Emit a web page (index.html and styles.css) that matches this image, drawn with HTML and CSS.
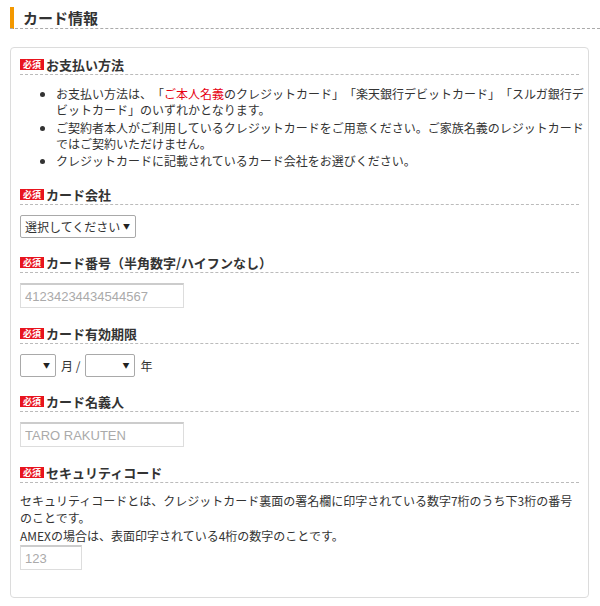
FILE: index.html
```html
<!DOCTYPE html>
<html lang="ja">
<head>
<meta charset="utf-8">
<title>カード情報</title>
<link rel="stylesheet" href="styles.css">
</head>
<body>
<h2 class="section-title">カード情報</h2>
<div class="card">
  <div class="field">
    <div class="field-label"><span class="badge">必須</span>お支払い方法</div>
    <ul class="notes">
      <li>お支払い方法は、「<span class="red">ご本人名義</span>のクレジットカード」「楽天銀行デビットカード」「スルガ銀行デビットカード」のいずれかとなります。</li>
      <li>ご契約者本人がご利用しているクレジットカードをご用意ください。ご家族名義のレジットカードではご契約いただけません。</li>
      <li>クレジットカードに記載されているカード会社をお選びください。</li>
    </ul>
  </div>
  <div class="field">
    <div class="field-label"><span class="badge">必須</span>カード会社</div>
    <div class="control">
      <div class="select select-company"><span class="sel-text">選択してください</span><span class="arrow">▼</span></div>
    </div>
  </div>
  <div class="field">
    <div class="field-label"><span class="badge">必須</span>カード番号（半角数字/ハイフンなし）</div>
    <div class="control">
      <input class="text-input input-wide" type="text" placeholder="41234234434544567">
    </div>
  </div>
  <div class="field">
    <div class="field-label"><span class="badge">必須</span>カード有効期限</div>
    <div class="control expiry">
      <div class="select select-month"><span class="sel-text"></span><span class="arrow">▼</span></div>
      <span class="unit">月 /</span>
      <div class="select select-year"><span class="sel-text"></span><span class="arrow">▼</span></div>
      <span class="unit">年</span>
    </div>
  </div>
  <div class="field">
    <div class="field-label"><span class="badge">必須</span>カード名義人</div>
    <div class="control">
      <input class="text-input input-wide" type="text" placeholder="TARO RAKUTEN">
    </div>
  </div>
  <div class="field field-last">
    <div class="field-label"><span class="badge">必須</span>セキュリティコード</div>
    <p class="desc">セキュリティコードとは、クレジットカード裏面の署名欄に印字されている数字7桁のうち下3桁の番号のことです。<br>AMEXの場合は、表面印字されている4桁の数字のことです。</p>
    <input class="text-input input-code" type="text" placeholder="123">
  </div>
</div>
</body>
</html>
```

FILE: styles.css
```css
html, body {
  margin: 0;
  padding: 0;
  background: #fff;
}
body {
  padding: 7px 0 0 10px;
  font-family: "Noto Sans CJK JP", "Noto Sans", sans-serif;
  font-size: 12px;
  color: #333;
  text-spacing-trim: space-all;
}
.section-title {
  margin: 0;
  font-size: 15px;
  font-weight: bold;
  line-height: 21px;
  color: #333;
  padding-left: 9px;
  border-left: 4px solid #f39800;
}
.section-title::after {
  content: "";
  display: block;
  margin-left: -13px;
  border-bottom: 1px dashed #aaa;
}
.card {
  margin-top: 18px;
  width: 559px;
  border: 1px solid #dcdcdc;
  border-radius: 4px;
  padding: 8px 9px 27px 9px;
}
.field {
  margin-bottom: 16.5px;
}
.field-last {
  margin-bottom: 0;
}
.field-label {
  display: flex;
  align-items: center;
  font-size: 13px;
  font-weight: bold;
  line-height: 17px;
  padding-bottom: 1px;
  border-bottom: 1px dashed #bbb;
  color: #333;
}
.badge {
  display: inline-block;
  width: 24px;
  height: 11px;
  line-height: 11px;
  background: #e8141e;
  color: #fff;
  font-size: 9px;
  font-weight: bold;
  text-align: center;
  margin-right: 2px;
}
.notes {
  margin: 11px -6px 0 0;
  padding-left: 36px;
  line-height: 16px;
}
.notes li + li {
  margin-top: 1.5px;
}
.red {
  color: #e60012;
}
.control {
  display: flex;
  margin-top: 10px;
}
.select {
  display: flex;
  align-items: center;
  box-sizing: border-box;
  height: 23px;
  border: 1px solid #a9a9a9;
  border-radius: 2px;
  padding: 0 5px 0 4px;
  background: #fff;
  color: #333;
  font-size: 12px;
  white-space: nowrap;
}
.sel-text {
  flex: 1;
}
.select .arrow {
  font-size: 7px;
  margin-left: 2px;
  color: #222;
}
.select-company {
  width: 116px;
}
.select-month {
  width: 36px;
}
.select-year {
  width: 50px;
}
.expiry {
  align-items: center;
  gap: 5px;
}
.unit {
  font-size: 12px;
  color: #333;
}
.text-input {
  display: block;
  box-sizing: border-box;
  height: 25px;
  margin: 0;
  border: 1px solid #ddd;
  border-top: 2px solid #ccc;
  padding: 0 4px;
  font-family: "Liberation Sans", Arial, sans-serif;
  font-size: 13px;
  color: #333;
  background: #fff;
  outline: none;
}
.text-input::placeholder {
  color: #aaa;
}
.input-wide {
  width: 164px;
}
.input-code {
  width: 62px;
  margin-top: 1px;
}
.desc {
  margin: 9px 0 0 0;
  line-height: 17.5px;
}
```
